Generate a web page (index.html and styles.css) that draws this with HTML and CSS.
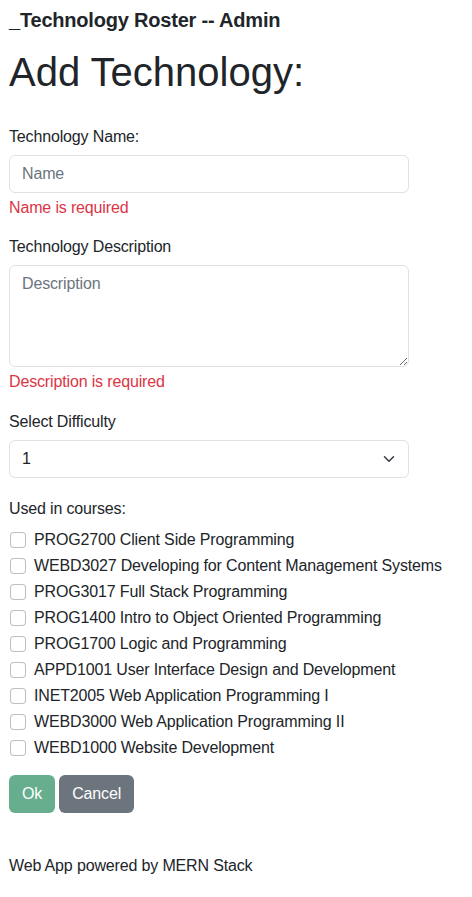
FILE: index.html
```html
<!DOCTYPE html>
<html lang="en">
<head>
<meta charset="utf-8">
<title>Technology Roster -- Admin</title>
<link rel="stylesheet" href="styles.css">
</head>
<body>
<div class="page">
  <div class="brand">_Technology Roster -- Admin</div>
  <h1 class="title">Add Technology:</h1>
  <form class="form">
    <div class="field">
      <label class="label" for="name">Technology Name:</label>
      <input class="control" id="name" type="text" placeholder="Name">
      <div class="error">Name is required</div>
    </div>
    <div class="field field-desc">
      <label class="label" for="desc">Technology Description</label>
      <textarea class="control area" id="desc" placeholder="Description"></textarea>
      <div class="error">Description is required</div>
    </div>
    <div class="field">
      <label class="label" for="diff">Select Difficulty</label>
      <div class="select" id="diff">
        <span>1</span>
        <svg class="chev" width="12" height="12" viewBox="0 0 16 16"><path d="M2 5l6 6 6-6" fill="none" stroke="#343a40" stroke-width="2" stroke-linecap="round" stroke-linejoin="round"/></svg>
      </div>
    </div>
    <div class="courses">
      <div class="label">Used in courses:</div>
      <label class="check"><span class="box"></span>PROG2700 Client Side Programming</label>
      <label class="check"><span class="box"></span>WEBD3027 Developing for Content Management Systems</label>
      <label class="check"><span class="box"></span>PROG3017 Full Stack Programming</label>
      <label class="check"><span class="box"></span>PROG1400 Intro to Object Oriented Programming</label>
      <label class="check"><span class="box"></span>PROG1700 Logic and Programming</label>
      <label class="check"><span class="box"></span>APPD1001 User Interface Design and Development</label>
      <label class="check"><span class="box"></span>INET2005 Web Application Programming I</label>
      <label class="check"><span class="box"></span>WEBD3000 Web Application Programming II</label>
      <label class="check"><span class="box"></span>WEBD1000 Website Development</label>
    </div>
    <div class="buttons">
      <button type="button" class="btn ok">Ok</button>
      <button type="button" class="btn cancel">Cancel</button>
    </div>
  </form>
  <div class="footer">Web App powered by MERN Stack</div>
</div>
</body>
</html>
```

FILE: styles.css
```css
* { box-sizing: border-box; }
html, body { margin: 0; padding: 0; background: #fff; }
body {
  font-family: "Liberation Sans", Arial, sans-serif;
  font-size: 16px;
  line-height: 24px;
  letter-spacing: -0.15px;
  color: #212529;
}
.page { padding: 8px 9px 0 9px; }
.brand { font-size: 20px; font-weight: 700; line-height: 24px; letter-spacing: -0.2px; }
.title { font-size: 40px; font-weight: 400; line-height: 48px; margin: 16px 0 0 0; letter-spacing: 0; }
.form { margin-top: 29px; display: flex; flex-direction: column; }
.field { display: flex; flex-direction: column; margin-bottom: 15px; width: 400px; }
.field-desc { margin-bottom: 16px; }
.label { display: block; line-height: 24px; margin-bottom: 6px; }
.control {
  display: block; width: 400px; height: 38px;
  font: inherit; letter-spacing: inherit; line-height: 24px; color: #212529;
  padding: 6px 12px;
  border: 1px solid #dee2e6; border-radius: 6px; background: #fff;
  margin: 0;
}
.control::placeholder { color: #6c757d; }
.area { height: 102px; resize: vertical; }
.error { color: #dc3545; line-height: 24px; margin-top: 3px; }
.select {
  display: flex; align-items: center; justify-content: space-between;
  width: 400px; height: 38px; padding: 6px 13px 6px 12px;
  border: 1px solid #dee2e6; border-radius: 6px;
}
.chev { width: 12px; height: 12px; }
.courses { display: flex; flex-direction: column; gap: 2px; margin-top: 4px; }
.courses .label { margin-bottom: 5px; }
.check { display: flex; align-items: center; line-height: 24px; white-space: nowrap; }
.box {
  width: 16px; height: 16px; margin: 0 8px 0 1px;
  border: 1px solid rgba(0,0,0,.25); border-radius: 4px; background: #fff; flex: none;
}
.buttons { display: flex; gap: 4px; margin-top: 15px; }
.btn {
  font: inherit; letter-spacing: inherit; line-height: 24px; height: 38px; padding: 6px 12px;
  border: 1px solid transparent; border-radius: 6px; color: #fff; margin: 0;
}
.ok { background: #66ae8e; }
.cancel { background: #6c757d; }
.footer { margin-top: 41px; line-height: 24px; }
```
